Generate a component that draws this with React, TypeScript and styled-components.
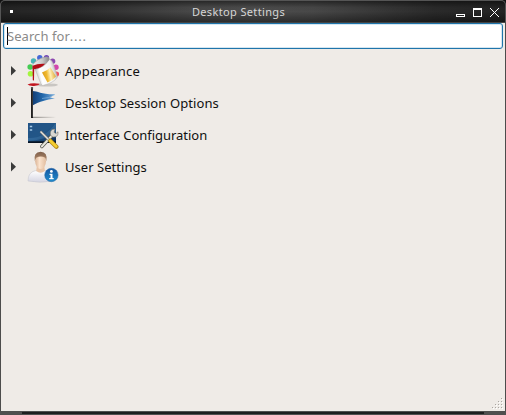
import React from 'react';
import styled, { createGlobalStyle } from 'styled-components';

const GlobalStyle = createGlobalStyle`
  * { box-sizing: border-box; }
  html, body { margin: 0; padding: 0; background: #111; overflow: hidden; }
`;

const Window = styled.div`
  width: 506px;
  height: 415px;
  display: flex;
  flex-direction: column;
  background: #4d4c4c;
  border-radius: 5px 5px 0 0;
  overflow: hidden;
  font-family: 'Noto Sans', sans-serif;
`;

const TitleBar = styled.header`
  height: 23px;
  flex: none;
  display: grid;
  grid-template-columns: 60px 1fr 60px;
  align-items: center;
  border: 1px solid #555;
  border-bottom-color: #444;
  border-radius: 5px 5px 0 0;
  background:
    linear-gradient(180deg, rgba(0,0,0,0.45) 0, rgba(0,0,0,0.05) 30%, rgba(0,0,0,0) 50%, rgba(0,0,0,0.4) 100%),
    linear-gradient(90deg, #242424 0, #2a2a2a 14%, #484848 38%, #4d4d4d 50%, #484848 62%, #2a2a2a 86%, #242424 100%);
`;

const MenuDot = styled.span`
  width: 3px;
  height: 3px;
  margin-left: 9px;
  background: #fff;
`;

const Title = styled.h1`
  margin: 0 29px 0 0;
  justify-self: center;
  font-size: 11px;
  font-weight: 400;
  line-height: 16px;
  letter-spacing: 0.36px;
  color: #d6d6d6;
  white-space: nowrap;
`;

const Controls = styled.svg`
  display: block;
  width: 60px;
  height: 20px;
`;

const Body = styled.main`
  flex: none;
  height: 388px;
  margin: 0 1px;
  display: flex;
  flex-direction: column;
  background: #efebe7;
`;

const Search = styled.div`
  height: 26px;
  flex: none;
  margin: 0 2px;
  display: flex;
  align-items: center;
  border: 1px solid #1f75ab;
  border-radius: 3px;
  background: #fff;
  box-shadow: inset 0 0 0 1px #d5e6f0;
  padding: 0 3px;
`;

const Caret = styled.span`
  width: 1px;
  height: 18px;
  background: #000;
`;

const Placeholder = styled.span`
  margin-left: -1px;
  font-size: 13px;
  line-height: 18px;
  letter-spacing: 0.06px;
  color: #8a8a89;
`;

const PlaceholderDots = styled.span`
  letter-spacing: 0.7px;
`;

const Tree = styled.ul`
  list-style: none;
  margin: 6px 0 0;
  padding: 0;
  flex: 1;
`;

const Row = styled.li`
  height: 32px;
  display: flex;
  align-items: center;
  padding-left: 10px;
`;

const Arrow = styled.svg`
  width: 5px;
  height: 10px;
  margin-right: 11px;
`;

const Icon = styled.svg`
  width: 32px;
  height: 32px;
  margin-right: 6px;
`;

const Label = styled.span<{ $tracking: number }>`
  font-size: 13px;
  line-height: 18px;
  letter-spacing: ${({ $tracking }) => $tracking}px;
  color: #101010;
  white-space: nowrap;
`;

const Grip = styled.svg`
  align-self: flex-end;
  width: 14px;
  height: 14px;
`;

const BottomEdge = styled.footer`
  height: 4px;
  flex: none;
  display: grid;
  grid-template-columns: 22px 1fr 22px;
  background: #504f4f;
`;

const EdgeBar = styled.span`
  grid-column: 2;
  height: 2px;
  margin-top: 1px;
  background: #1e1e1f;
`;

const AppearanceIcon = () => (
  <Icon viewBox="0 0 32 32">
    <defs>
      <linearGradient id="pail" x1="0" x2="1" y1="0.65" y2="0.35">
        <stop offset="0" stopColor="#b5b5b5" /><stop offset=".25" stopColor="#fff" />
        <stop offset=".75" stopColor="#f2f2f2" /><stop offset="1" stopColor="#a2a2a2" />
      </linearGradient>
      <linearGradient id="rim" x1="0" x2="1">
        <stop offset="0" stopColor="#f4f4f4" /><stop offset=".6" stopColor="#c8c8c8" /><stop offset="1" stopColor="#888" />
      </linearGradient>
      <linearGradient id="gold" x1="0" x2="1" y1=".6" y2=".4">
        <stop offset="0" stopColor="#d99b16" /><stop offset=".35" stopColor="#f0b92f" />
        <stop offset=".6" stopColor="#fff0b8" /><stop offset="1" stopColor="#dba324" />
      </linearGradient>
    </defs>
    <ellipse cx="20" cy="30" rx="11" ry="1.6" fill="#c9c6c2" />
    <circle cx="3.5" cy="18.8" r="2.8" fill="#a4f53e" />
    <circle cx="3.2" cy="12" r="2.8" fill="#45cc54" />
    <circle cx="6.5" cy="6" r="2.7" fill="#49b4b6" />
    <circle cx="12.8" cy="2.8" r="2.7" fill="#4668d7" />
    <circle cx="19.5" cy="2.8" r="2.7" fill="#7046b5" />
    <circle cx="25.6" cy="6.2" r="2.7" fill="#8d48b0" />
    <circle cx="29" cy="12.2" r="2.7" fill="#d345ac" />
    <circle cx="29.5" cy="19" r="2.6" fill="#f0525f" />
    <path d="M8 14 L22.5 4.5 Q25 5 26 8 L30.5 22 Q27 28 15.5 30.5 L14 29 Z" fill="url(#pail)" stroke="#b2b0ae" strokeWidth=".5" />
    <path d="M5.5 10 Q10 3.5 19 2 Q22.8 1.8 22 5 Q18 11.5 10 14 Q5 14.5 5.5 10Z" fill="url(#rim)" stroke="#a0a0a0" strokeWidth=".7" />
    <path d="M5.5 10.8 Q11 8.2 18.2 8.8 Q14 13.3 8.3 14 L7.2 14 L7 25 Q6.3 26 5.8 25 Z" fill="#b30d16" />
    <path d="M15 17.5 Q20 16 23.5 12.2 L29 21.5 Q26 25.5 20.5 27.5 Z" fill="url(#gold)" />
    <path d="M.5 29.6 Q5 27.4 12.5 28.8 Q13 30 7 31 Q2 31.2 .5 29.6Z" fill="#c21720" />
  </Icon>
);

const FlagIcon = () => (
  <Icon viewBox="0 0 32 32">
    <defs>
      <linearGradient id="flag" x1="0" x2="1">
        <stop offset="0" stopColor="#123e75" /><stop offset=".45" stopColor="#2368ab" /><stop offset="1" stopColor="#76a9d8" />
      </linearGradient>
      <linearGradient id="shade"><stop stopColor="#8b8884" /><stop offset="1" stopColor="#efebe7" /></linearGradient>
    </defs>
    <path d="M5 29.8 H30 L27 31 H4Z" fill="url(#shade)" />
    <path d="M5.5 4 C11 4 14 7.5 28 7.3 L23 10.4 L28 11.6 C19 13 13 14.5 5.5 18.5 Z" fill="url(#flag)" />
    <path d="M15 11.5 Q22 11.5 28 7.5" fill="none" stroke="#8bb8df" strokeWidth=".6" />
    <path d="M5 1 V31" stroke="#161616" strokeWidth="1.9" />
    <path d="M5.4 2 V30" stroke="#686868" strokeWidth=".4" />
    <circle cx="5" cy="1.1" r="1.2" fill="#4a4a4a" />
  </Icon>
);

const InterfaceIcon = () => (
  <Icon viewBox="0 0 32 32">
    <defs>
      <linearGradient id="screen" x1="0" x2="1" y2="1">
        <stop stopColor="#225387" /><stop offset=".5" stopColor="#225687" /><stop offset="1" stopColor="#0b2b55" />
      </linearGradient>
    </defs>
    <rect x="1" y="4" width="28" height="20" fill="url(#screen)" />
    <path d="M1 19 Q17 20 28 5 L29 4 V13 Q20 21 1 22Z" fill="#4e87b7" opacity=".35" />
    <rect x="1" y="22.3" width="28" height="1.7" fill="#071222" />
    <path d="M2.8 7.5h2.4M2.8 11h2.4" stroke="#a7cae8" strokeWidth="1.7" />
    <path d="M14.8 27.5 L26 15.5" stroke="#55564f" strokeWidth="3.4" strokeLinecap="round" />
    <path d="M14.8 27.5 L26 15.5" stroke="#e8e7de" strokeWidth="1.9" strokeLinecap="round" />
    <path d="M24.7 17.5 Q21.6 14 25 10.6 L28 10 L27 13.3 L29 14.5 L31 12.8 Q31.5 18.4 26.5 18Z" fill="#d8d7d2" stroke="#77766c" strokeWidth=".6" />
    <path d="M13.5 12.5 L22.5 21.5" stroke="#6b6d6d" strokeWidth="2.5" />
    <path d="M13.5 12.5 L22.5 21.5" stroke="#e3e3de" strokeWidth="1.4" />
    <path d="M23.3 21.8 L29.4 27.7" stroke="#ad8516" strokeWidth="4.2" strokeLinecap="round" />
    <path d="M23.3 21.8 L29.2 27.4" stroke="#f6ce31" strokeWidth="2.7" strokeLinecap="round" />
  </Icon>
);

const UserIcon = () => (
  <Icon viewBox="0 0 32 32">
    <defs>
      <linearGradient id="shirt" x2="0" y2="1"><stop stopColor="#fff" /><stop offset="1" stopColor="#d5d5e2" /></linearGradient>
      <linearGradient id="skin" x2="1"><stop stopColor="#dbb496" /><stop offset=".4" stopColor="#fbe3cd" /><stop offset="1" stopColor="#e2bd9f" /></linearGradient>
      <linearGradient id="hair" x2="0" y2="1"><stop stopColor="#80614d" /><stop offset="1" stopColor="#b18a6b" /></linearGradient>
      <linearGradient id="info" x2="0" y2="1"><stop stopColor="#1657a1" /><stop offset="1" stopColor="#218ccc" /></linearGradient>
    </defs>
    <path d="M1 30 Q1 21 8.5 19.7 L18.5 19.7 Q25 21 26 30 Q13 32.4 1 30Z" fill="url(#shirt)" stroke="#c5c4cc" strokeWidth=".5" />
    <path d="M10 14 H17 L18 20 Q13.5 23.5 9.2 20Z" fill="#e9c6aa" />
    <ellipse cx="13.6" cy="10.3" rx="5.4" ry="7.6" fill="url(#skin)" />
    <path d="M7.8 10.3 Q6.2 1 13.6 .8 Q21 1 19.4 10.3 L18.2 6.8 Q14 4.2 9.2 6.8Z" fill="url(#hair)" />
    <circle cx="24.4" cy="24" r="6.7" fill="url(#info)" stroke="#2566a4" strokeWidth=".5" />
    <circle cx="24.4" cy="20.4" r="1.4" fill="#fff" />
    <path d="M22.5 22.8 H25.5 V27 H26.7 V28.3 H22.2 V27 H23.5 V24 H22.5Z" fill="#fff" />
  </Icon>
);

const categories = [
  { label: 'Appearance', Glyph: AppearanceIcon, tracking: 0.2 },
  { label: 'Desktop Session Options', Glyph: FlagIcon, tracking: 0.09 },
  { label: 'Interface Configuration', Glyph: InterfaceIcon, tracking: -0.03 },
  { label: 'User Settings', Glyph: UserIcon, tracking: 0.04 },
];

const gripDots = [[10, 1], [7, 4], [10, 4], [4, 7], [7, 7], [10, 7], [1, 10], [4, 10], [7, 10], [10, 10]];

export default function App() {
  return (
    <>
      <GlobalStyle />
      <Window>
        <TitleBar>
          <MenuDot />
          <Title>Desktop Settings</Title>
          <Controls viewBox="0 0 60 20" fill="none" stroke="#fff" shapeRendering="crispEdges">
            <rect x="11.5" y="12.5" width="8" height="2" />
            <path d="M28.5 6.5h8v8h-8zM28 7.5h9" />
            <path d="M45 6l9 9M54 6l-9 9" shapeRendering="auto" />
          </Controls>
        </TitleBar>
        <Body>
          <Search>
            <Caret />
            <Placeholder>Search for<PlaceholderDots>....</PlaceholderDots></Placeholder>
          </Search>
          <Tree>
            {categories.map(({ label, Glyph, tracking }) => (
              <Row key={label}>
                <Arrow viewBox="0 0 5 10"><path d="M0 0L5 4.7L0 9.4Z" fill="#3b3b3b" /></Arrow>
                <Glyph />
                <Label $tracking={tracking}>{label}</Label>
              </Row>
            ))}
          </Tree>
          <Grip viewBox="0 0 14 14" shapeRendering="crispEdges">
            {gripDots.map(([x, y]) => (
              <g key={`${x}-${y}`}>
                <rect x={x + 1} y={y + 1} width="1" height="1" fill="#fff" />
                <rect x={x} y={y} width="1" height="1" fill="#aaa6a2" />
              </g>
            ))}
          </Grip>
        </Body>
        <BottomEdge><EdgeBar /></BottomEdge>
      </Window>
    </>
  );
}
